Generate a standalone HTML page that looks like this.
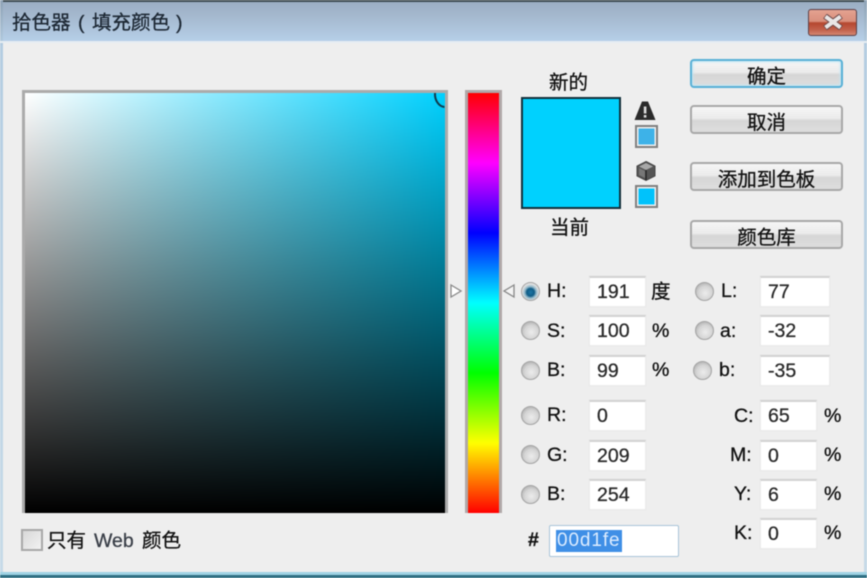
<!DOCTYPE html>
<html lang="zh">
<head>
<meta charset="utf-8">
<style>
html,body{margin:0;padding:0;width:867px;height:578px;overflow:hidden;background:#eeeeee}
#w{position:relative;width:867px;height:578px;overflow:hidden;background:#eeeeee;font-family:"Liberation Sans","Noto Sans CJK SC",sans-serif;font-size:19.5px;color:#111;-webkit-text-stroke:.3px;filter:blur(.4px)}
#w div,#w span{position:absolute;box-sizing:border-box}
.t{white-space:pre;line-height:24px;height:24px}
.b{left:690px;width:153px;height:29px;border:2px solid #a8a8a8;border-radius:4px;background:linear-gradient(#f6f6f6 0,#ebebeb 45%,#d6d6d6 55%,#dedede 100%);text-align:center;line-height:32px;color:#111}
.i{background:#fff;border:1px solid #ececec;border-top:2px solid #d2d2d2;box-shadow:0 0 1px #ddd;padding-left:7px;line-height:29px;height:31px;color:#2a2a2a}
.w1{left:589px;width:57px}
.w2{left:760px;width:70px}
.w3{left:760px;width:57px}
.r{width:19px;height:19px;border-radius:50%;border:1.5px solid #a4a4a4;background:radial-gradient(circle at 55% 60%,#ececec 0,#d4d4d4 50%,#b6b6b6 75%,#dcdcdc 100%)}
</style>
</head>
<body>
<div id="w">
  <!-- title bar -->
  <div style="left:0;top:0;width:867px;height:41px;background:linear-gradient(#9aadc2 0,#a5b9cf 40%,#b6cfe8 100%)"></div>
  <div style="left:0;top:0;width:867px;height:2px;background:#3c4a50"></div>
  <div style="left:0;top:0;width:3px;height:578px;background:linear-gradient(#8fa3b6 0,#b4cde2 8%,#c7dbe8 100%)"></div>
  <div style="left:864px;top:0;width:3px;height:578px;background:linear-gradient(#8fa3b6 0,#b4cde2 8%,#c7dbe8 100%)"></div>
  <div style="left:0;top:41px;width:867px;height:2px;background:#e6edf3"></div>
  <div style="left:0;top:572px;width:867px;height:3px;background:#9fd3e4"></div>
  <div style="left:0;top:575px;width:867px;height:3px;background:#2f6f83"></div>
  <span class="t" style="left:12px;top:11px;color:#1c2733">拾色器</span>
  <span class="t" style="left:78px;top:11px;color:#1c2733">(</span>
  <span class="t" style="left:92px;top:11px;color:#1c2733">填充颜色</span>
  <span class="t" style="left:176px;top:11px;color:#1c2733">)</span>

  <!-- close -->
  <div style="left:808px;top:9px;width:49px;height:27px;border:1.5px solid #5a4048;border-radius:3px;background:linear-gradient(#e4a292 0,#d98f7c 45%,#b5462f 52%,#c2624d 80%,#d58772 100%)"></div>
  <svg style="position:absolute;left:822px;top:14px" width="22" height="16" viewBox="0 0 22 16"><path d="M3 2 L19 14 M19 2 L3 14" stroke="#6e4a4a" stroke-width="6" fill="none"/><path d="M3.5 2.5 L18.5 13.5 M18.5 2.5 L3.5 13.5" stroke="#e9e6e6" stroke-width="4" fill="none"/></svg>

  <!-- colour field -->
  <div style="left:22px;top:90px;width:426px;height:423px;background:#ababab"></div>
  <div style="left:25px;top:93px;width:420px;height:420px;background:linear-gradient(to bottom,rgba(0,0,0,0),#000),linear-gradient(to right,#fff,#00d1ff)"></div>
  <svg style="position:absolute;left:425px;top:85px" width="23" height="28" viewBox="0 0 23 28"><path d="M10 8 A10 13 0 0 0 19.5 22" stroke="#103a4c" stroke-width="2" fill="none"/></svg>

  <!-- hue bar -->
  <div style="left:465px;top:90px;width:37px;height:423px;background:#b0a8a8"></div>
  <div style="left:468px;top:93px;width:31px;height:420px;background:linear-gradient(#ff0000 0,#ff00ff 16.67%,#0000ff 33.33%,#00ffff 50%,#00ff00 66.67%,#ffff00 83.33%,#ff0000 100%)"></div>
  <svg style="position:absolute;left:449px;top:282px" width="14" height="18" viewBox="0 0 14 18"><path d="M2 3 L12 9 L2 15 Z" fill="#fff" stroke="#888" stroke-width="1.3"/></svg>
  <svg style="position:absolute;left:502px;top:282px" width="14" height="18" viewBox="0 0 14 18"><path d="M12 3 L2 9 L12 15 Z" fill="#f4f4f4" stroke="#888" stroke-width="1.3"/></svg>

  <!-- swatch -->
  <span class="t" style="left:549px;top:71px">新的</span>
  <div style="left:521px;top:97px;width:100px;height:112px;border:2px solid #12303c;background:#00d1fe"></div>
  <span class="t" style="left:550px;top:216px">当前</span>

  <!-- warning icons -->
  <svg style="position:absolute;left:634px;top:100px" width="22" height="21" viewBox="0 0 22 21"><path d="M8 1.5 h6 L21.5 20 H.5 Z" fill="#2a2a2a"/><rect x="9.8" y="6.5" width="2.6" height="7" fill="#ddd"/><rect x="9.8" y="15" width="2.6" height="2.6" fill="#ddd"/></svg>
  <div style="left:635px;top:125px;width:23px;height:23px;border:2px solid #808080;background:#3db2e8;box-shadow:inset 0 0 0 1.5px #f0f0f0"></div>
  <svg style="position:absolute;left:635px;top:160px" width="22" height="22" viewBox="0 0 22 22"><path d="M11 1.5 L20 6 V16 L11 20.5 L2 16 V6 Z" fill="#555" stroke="#444" stroke-width="1"/><path d="M11 3 L18 6.5 L11 10 L4 6.5 Z" fill="#a8a8a8"/><path d="M11 10 V20" stroke="#222" stroke-width="1.3"/><path d="M4 8 L10 11 V18 L4 15 Z" fill="#777"/></svg>
  <div style="left:635px;top:185px;width:23px;height:23px;border:2px solid #808080;background:#00c2fb;box-shadow:inset 0 0 0 1.5px #f0f0f0"></div>

  <!-- buttons -->
  <div class="b" style="top:59px;border-color:#58b0d6;box-shadow:inset 0 0 2px 1px #bfe6f5">确定</div>
  <div class="b" style="top:105px">取消</div>
  <div class="b" style="top:162px">添加到色板</div>
  <div class="b" style="top:220px">颜色库</div>

  <!-- radios -->
  <div class="r" style="left:521px;top:282px;background:radial-gradient(circle at 50% 55%,#1e77a6 0,#0f5c86 30%,#8fb6c8 45%,#e0e0e0 65%,#e0e0e0 100%)"></div>
  <div class="r" style="left:521px;top:321px"></div>
  <div class="r" style="left:521px;top:361px"></div>
  <div class="r" style="left:521px;top:406px"></div>
  <div class="r" style="left:521px;top:445px"></div>
  <div class="r" style="left:521px;top:485px"></div>
  <div class="r" style="left:695px;top:282px"></div>
  <div class="r" style="left:695px;top:321px"></div>
  <div class="r" style="left:693px;top:361px"></div>

  <span class="t" style="left:547px;top:279px">H:</span>
  <span class="t" style="left:547px;top:319px">S:</span>
  <span class="t" style="left:547px;top:358px">B:</span>
  <span class="t" style="left:547px;top:403px">R:</span>
  <span class="t" style="left:547px;top:443px">G:</span>
  <span class="t" style="left:547px;top:482px">B:</span>
  <span class="t" style="left:721px;top:279px">L:</span>
  <span class="t" style="left:720px;top:319px">a:</span>
  <span class="t" style="left:719px;top:358px">b:</span>

  <!-- inputs col 1 -->
  <div class="i w1" style="top:276px">191</div>
  <div class="i w1" style="top:315px">100</div>
  <div class="i w1" style="top:355px">99</div>
  <div class="i w1" style="top:400px">0</div>
  <div class="i w1" style="top:440px">209</div>
  <div class="i w1" style="top:479px">254</div>
  <span class="t" style="left:651px;top:280px">度</span>
  <span class="t" style="left:652px;top:319px">%</span>
  <span class="t" style="left:652px;top:358px">%</span>

  <!-- inputs col 2 -->
  <div class="i w2" style="top:276px">77</div>
  <div class="i w2" style="top:315px">-32</div>
  <div class="i w2" style="top:355px">-35</div>
  <div class="i w3" style="top:400px">65</div>
  <div class="i w3" style="top:440px">0</div>
  <div class="i w3" style="top:479px">6</div>
  <div class="i w3" style="top:518px">0</div>
  <span class="t" style="left:734px;top:404px">C:</span>
  <span class="t" style="left:730px;top:443px">M:</span>
  <span class="t" style="left:734px;top:482px">Y:</span>
  <span class="t" style="left:734px;top:521px">K:</span>
  <span class="t" style="left:824px;top:404px">%</span>
  <span class="t" style="left:824px;top:443px">%</span>
  <span class="t" style="left:824px;top:482px">%</span>
  <span class="t" style="left:824px;top:521px">%</span>

  <!-- hex -->
  <span class="t" style="left:528px;top:528px;font-weight:bold">#</span>
  <div style="left:549px;top:525px;width:130px;height:32px;background:#fff;border:1.5px solid #a9c4d8;border-radius:2px"></div>
  <div style="left:556px;top:530px;width:66px;height:22px;background:#3f8fe6"></div>
  <span class="t" style="left:557px;top:529px;color:#dcecff;-webkit-text-stroke:0;font-size:19px;letter-spacing:.9px">00d1fe</span>

  <!-- web only -->
  <div style="left:21px;top:529px;width:22px;height:22px;border:2px solid #a8a8a8;background:linear-gradient(135deg,#d8d8d8,#f2f2f2)"></div>
  <span class="t" style="left:47px;top:529px">只有</span>
  <span class="t" style="left:94px;top:529px;color:#3a3f48">Web</span>
  <span class="t" style="left:142px;top:529px">颜色</span>
</div>
</body>
</html>
